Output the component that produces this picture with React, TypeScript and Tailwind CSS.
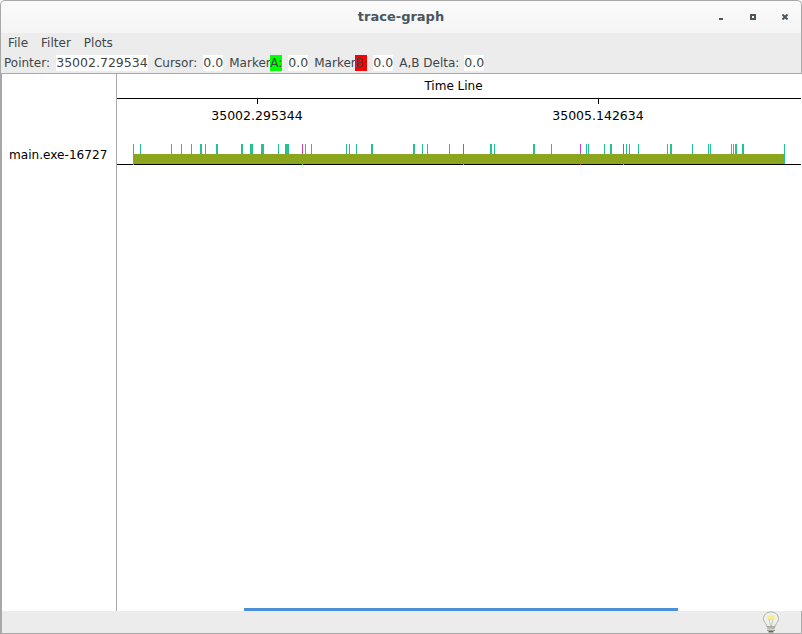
const ticks: [number, number, string][] = [
  [133, 1, "#1fc48e"], [140, 1, "#1fc48e"], [171, 1, "#1fc48e"], [181, 1, "#1fc48e"], [191, 1, "#1fc48e"],
  [200, 2, "#1fc48e"], [205, 1, "#1fc48e"], [216, 2, "#1fc48e"], [241, 2, "#1fc48e"], [250, 3, "#1fc48e"],
  [261, 3, "#1fc48e"], [278, 1, "#1fc48e"], [285, 4, "#1fc48e"], [302, 1, "#d63fb0"], [305, 1, "#1fc48e"],
  [311, 1, "#1fc48e"], [346, 1, "#1fc48e"], [349, 1, "#1fc48e"], [356, 1, "#1fc48e"], [371, 2, "#1fc48e"],
  [413, 2, "#1fc48e"], [422, 1, "#1fc48e"], [427, 1, "#1fc48e"], [449, 1, "#1fc48e"], [463, 1, "#c04aa0"],
  [490, 2, "#1fc48e"], [494, 1, "#1fc48e"], [533, 2, "#1fc48e"], [551, 1, "#1fc48e"], [580, 1, "#c83fe0"],
  [586, 1, "#1fc48e"], [588, 1, "#1fc48e"], [604, 1, "#1fc48e"], [610, 2, "#1fc48e"], [623, 1, "#c04aa0"],
  [626, 1, "#1fc48e"], [629, 1, "#1fc48e"], [638, 1, "#1fc48e"], [667, 1, "#1fc48e"], [670, 2, "#1fc48e"],
  [692, 1, "#1fc48e"], [708, 1, "#1fc48e"], [710, 1, "#1fc48e"], [731, 1, "#1fc48e"], [733, 1, "#1fc48e"],
  [735, 2, "#1fc48e"], [742, 2, "#1fc48e"], [784, 1, "#1fc48e"],
];

const font = { fontFamily: "'DejaVu Sans', sans-serif" };

function Value({ text, wide }: { text: string; wide?: boolean }) {
  return (
    <span className={`ml-[6px] bg-white text-center text-[12.5px] ${wide ? "w-[92px]" : "w-[20px]"}`}>{text}</span>
  );
}

function TaskRow() {
  // coordinates in the svg are page x minus the 117px label column
  return (
    <svg width="684" height="26" className="block">
      {ticks.map(([x, w, c]) => (
        <rect key={x} x={x - 117} y={5} width={w} height={10} fill={c} />
      ))}
      <rect x={16} y={15} width={651} height={10} fill="#8ba61c" />
      <rect x={667} y={15} width={1} height={10} fill="#1fc48e" />
      <rect x={0} y={25} width={684} height={1} fill="#000" />
      <rect x={16} y={25} width={1} height={1} fill="#33dd33" />
      <rect x={185} y={25} width={1} height={1} fill="#33dd33" />
      <rect x={346} y={25} width={1} height={1} fill="#33dd33" />
      <rect x={463} y={25} width={1} height={1} fill="#e03020" />
      <rect x={506} y={25} width={1} height={1} fill="#33dd33" />
    </svg>
  );
}

function Bulb() {
  return (
    <svg width="18" height="22" viewBox="0 0 18 22">
      <path d="M9 1C4.6 1 1.5 4 1.5 7.800c0 2.800 2 4.300 3 6.200.3.6.4 1.200.4 1.800h8.200c0-.6.1-1.200.4-1.800 1-1.900 3-3.400 3-6.200C16.500 4 13.400 1 9 1Z" fill="#f0f0ea" stroke="#b0b0a8" />
      <ellipse cx="9" cy="6.500" rx="4" ry="2.500" fill="#f6ee8c" />
      <path d="M7 8l1.500 7M11 8l-1.500 7" stroke="#c8c8b8" fill="none" />
      <rect x="5" y="15.500" width="8" height="4.500" fill="#8e8e88" />
      <path d="M5 17h8M5 18.700h8" stroke="#e4e4e0" />
      <rect x="6.500" y="20" width="5" height="1.500" fill="#66665f" />
    </svg>
  );
}

export default function App() {
  return (
    <div className="flex h-[634px] w-[802px] flex-col overflow-hidden bg-white text-[12px] leading-[16px] text-[#3d4549]" style={font}>
      {/* ── Title bar ── */}
      <div className="rounded-t-[5px] border-x border-t border-[#a8a8a8] bg-gradient-to-b from-[#fbfbfb] to-[#ececec]">
        <div className="relative flex h-[32px] items-center justify-center">
          <span className="text-[13px] font-bold text-[#4b555c]">trace-graph</span>
          <div className="absolute right-[13px] top-[13px] flex items-start gap-[26px]">
            <span className="mr-[1px] mt-[4px] h-[2px] w-[4px] bg-[#4b555c]" />
            <span className="h-[6px] w-[6px] border-2 border-[#4b555c]" />
            <svg width="6" height="6" viewBox="0 0 6 6"><path d="M.5.5l5 5M5.500.5l-5 5" stroke="#4b555c" strokeWidth="2" /></svg>
          </div>
        </div>
        {/* ── Menu ── */}
        <div className="flex h-[20px] items-center gap-[13px] bg-[#ececec] pl-[7px] text-[#3d4549]">
          <span>File</span>
          <span>Filter</span>
          <span>Plots</span>
        </div>
        {/* ── Status line ── */}
        <div className="flex h-[20px] items-center whitespace-nowrap bg-[#ececec] pl-[3px]">
          <span>Pointer:</span>
          <Value text="35002.729534" wide />
          <span className="ml-[6px]">Cursor:</span>
          <Value text="0.0" />
          <span className="ml-[6px] w-[41px]">Marker</span>
          <span className="w-[12px] bg-[#00ff00]">A:</span>
          <Value text="0.0" />
          <span className="ml-[6px] w-[41px]">Marker</span>
          <span className="w-[12px] bg-[#ff0000]">B:</span>
          <Value text="0.0" />
          <span className="ml-[6px] w-[59px]">A,B Delta:</span>
          <Value text="0.0" />
        </div>
      </div>

      {/* ── Body ── */}
      <div className="flex min-h-0 flex-1 border-t border-[#a8a8a8]">
        <div className="flex w-[117px] shrink-0 flex-col border-x border-l-2 border-[#a8a8a8] border-r-[#a8a8a8]">
          <div className="ml-[7px] mt-[73px] whitespace-nowrap text-[12.1px] leading-[16px] text-black">main.exe-16727</div>
        </div>
        <div className="relative flex min-w-0 flex-1 flex-col text-black">
          <div className="h-[24px] pr-[12px] pt-[4px] text-center leading-[16px]">Time Line</div>
          <div className="mr-[1px] h-[1px] bg-black" />
          <div className="ml-[55px] flex gap-[171px]">
            <div className="flex w-[170px] flex-col items-center">
              <span className="h-[5px] w-[1px] bg-black" />
              <span className="mt-[4px] text-[12.5px]">35002.295344</span>
            </div>
            <div className="flex w-[170px] flex-col items-center">
              <span className="h-[5px] w-[1px] bg-black" />
              <span className="mt-[4px] text-[12.5px]">35005.142634</span>
            </div>
          </div>
          <div className="mt-[15px]">
            <TaskRow />
          </div>
          <div className="absolute bottom-0 left-[127px] h-[3px] w-[434px] bg-[#4a90d9]" />
        </div>
      </div>

      {/* ── Footer ── */}
      <div className="flex h-[23px] shrink-0 justify-end border-x border-b border-[#a8a8a8] border-l-2 bg-[#ececec] pr-[21px]">
        <Bulb />
      </div>
    </div>
  );
}
